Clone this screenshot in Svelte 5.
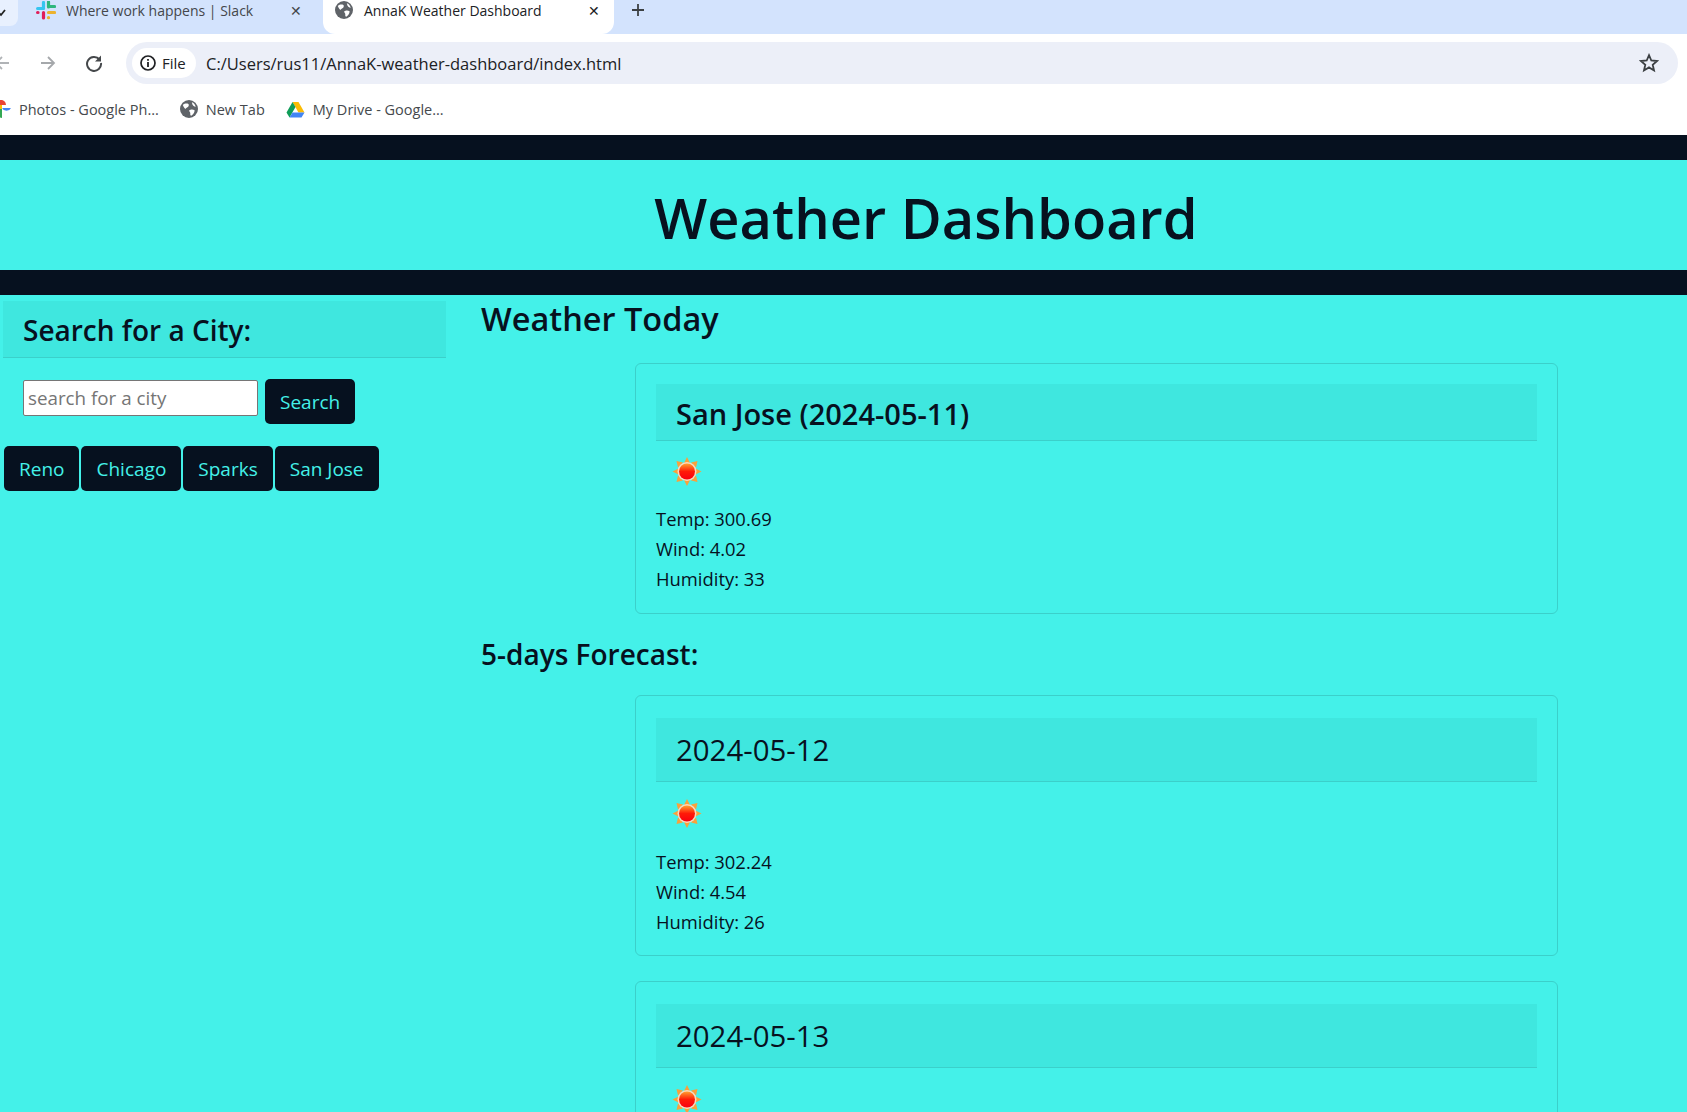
<script lang="ts">
	const history = ['Reno', 'Chicago', 'Sparks', 'San Jose'];
	const today = { temp: '300.69', wind: '4.02', humidity: '33' };
	const forecast = [
		{ date: '2024-05-12', temp: '302.24', wind: '4.54', humidity: '26' },
		{ date: '2024-05-13' }
	];
</script>

{#snippet globe(size)}
	<svg class="globe" width={size} height={size} viewBox="0 0 16 16">
		<circle cx="8" cy="8" r="8" fill="#5f6368" />
		<path d="M2.500 4.500C4 3 6 3 7.500 3.500 8.500 5 7 6.500 5.500 7 5 8.500 4 8 2.500 4.500zM8 9.500c2-1.500 3.500-1 5-.5 0 2-1.500 4-3 5-1.500-.5-.5-2-1-3zM10.500 2c1.500.5 3 2 3.500 4-1.500 0-3-1-3.500-4z" fill="#fff" />
	</svg>
{/snippet}

{#snippet sun()}
	<svg class="sun" viewBox="0 1 62 62" width="62" height="62">
		<defs>
			<linearGradient id="sunfill" x1="0" y1="0" x2="0" y2="1">
				<stop offset="0" stop-color="#ffa030" />
				<stop offset="0.5" stop-color="#ff1a08" />
				<stop offset="1" stop-color="#f80010" />
			</linearGradient>
		</defs>
		<g fill="#f9a13c">
			<path d="M31 16.500l3 6h-6zM31 45.500l3-6h-6zM16.500 31l6-3v6zM45.500 31l-6-3v6z" />
			<path d="M20.500 20.500l6.500 1.500-5 5zM41.500 20.500l-6.500 1.500 5 5zM20.500 41.500l6.500-1.500-5-5zM41.500 41.500l-6.500-1.500 5-5z" />
		</g>
		<circle cx="31" cy="31" r="9.500" fill="#fbd9c0" />
		<circle cx="31" cy="31" r="8" fill="url(#sunfill)" />
	</svg>
{/snippet}

<div class="chrome">
	<div class="tabstrip">
		<div class="stub"><svg width="8" height="8" viewBox="0 0 8 8"><path d="M-2 3l3 3 4-5" fill="none" stroke="#222" stroke-width="1.800" /></svg></div>
		<div class="tab">
			<svg class="slack" width="20" height="19" viewBox="0 0 20 19">
				<g fill="none" stroke-width="3.200" stroke-linecap="round">
					<path d="M7.500 1.500v5M1.600 7.500h6" stroke="#36c5f0" />
					<path d="M12.500 1v5M12.500 5.500h6" stroke="#2eb67d" />
					<path d="M12.500 11.500h6M12.500 16.500v.2" stroke="#ecb22e" />
					<path d="M1.600 11.500h.4M7.500 11.500v5.500" stroke="#e01e5a" />
				</g>
			</svg>
			<span class="tab-title">Where work happens | Slack</span>
			<span class="close">✕</span>
		</div>
		<div class="tab active">
			{@render globe(18)}
			<span class="tab-title">AnnaK Weather Dashboard</span>
			<span class="close">✕</span>
		</div>
		<span class="plus">
			<svg width="14" height="14" viewBox="0 0 14 14"><path d="M7 1v12M1 7h12" stroke="#3c4043" stroke-width="1.800" /></svg>
		</span>
	</div>

	<div class="toolbar">
		<svg class="nav back" width="16" height="16" viewBox="0 0 16 16"><path d="M15 8H2M8 2L2 8l6 6" fill="none" stroke="#b0b3b6" stroke-width="1.800" /></svg>
		<svg class="nav fwd" width="16" height="16" viewBox="0 0 16 16"><path d="M1 8h13M8 2l6 6-6 6" fill="none" stroke="#a5a8ab" stroke-width="1.800" /></svg>
		<svg class="nav reload" width="18" height="18" viewBox="0 0 18 18"><path d="M14.500 5.500A7 7 0 1 0 16 9" fill="none" stroke="#45484b" stroke-width="2" /><path d="M16 1.500v6h-6z" fill="#45484b" /></svg>
		<div class="omnibox">
			<div class="chip">
				<svg width="18" height="18" viewBox="0 0 18 18"><circle cx="9" cy="9" r="7" fill="none" stroke="#202124" stroke-width="1.700" /><path d="M9 8v5M9 5v1.800" stroke="#202124" stroke-width="1.800" /></svg>
				<span>File</span>
			</div>
			<span class="url">C:/Users/rus11/AnnaK-weather-dashboard/index.html</span>
			<svg class="star" width="20" height="20" viewBox="0 0 20 20"><path d="M10 2.200l2.300 5.300 5.700.5-4.300 3.800 1.300 5.600-5-3-5 3 1.300-5.600L2 8l5.700-.5z" fill="none" stroke="#3c4043" stroke-width="1.800" /></svg>
		</div>
	</div>

	<div class="bookmarks">
		<div class="bm photos">
			<svg width="12" height="18" viewBox="0 0 12 18">
				<path d="M0 0a5 5 0 0 1 5 5v4H0z" fill="#fbbc04" transform="translate(-3 0)" />
				<path d="M2 9V4a5 5 0 0 1 0 0h3a5 5 0 0 1 6 5z" fill="#ea4335" transform="translate(-5 -4)" />
				<path d="M2 9h9a5 5 0 0 1-9 0z" fill="#4285f4" transform="translate(0 -1)" />
				<path d="M2 9v9a5 5 0 0 1-5-5V9z" fill="#34a853" />
			</svg>
			<span>Photos - Google Ph...</span>
		</div>
		<div class="bm">
			{@render globe(18)}
			<span>New Tab</span>
		</div>
		<div class="bm">
			<svg width="19" height="17" viewBox="0 0 19 17">
				<path d="M6.500 1h6l6 10.500h-6z" fill="#fbbc04" />
				<path d="M6.500 1L.500 11.500l3 5 6-10.500z" fill="#0f9d58" />
				<path d="M3.500 16.500h12l3-5H6.500z" fill="#4285f4" />
			</svg>
			<span>My Drive - Google...</span>
		</div>
	</div>
</div>

<header class="banner">
	<h1>Weather Dashboard</h1>
</header>

<div class="page">
	<aside class="sidebar">
		<h2 class="side-head">Search for a City:</h2>
		<form class="search" onsubmit={(e) => e.preventDefault()}>
			<input type="text" placeholder="search for a city" />
			<button class="btn" type="submit">Search</button>
		</form>
		<div class="history">
			{#each history as city}
				<button class="btn" type="button">{city}</button>
			{/each}
		</div>
	</aside>

	<main class="main">
		<h2 class="section">Weather Today</h2>
		<section class="card">
			<h3 class="card-head today">San Jose (2024-05-11)</h3>
			{@render sun()}
			<p>Temp: {today.temp}</p>
			<p>Wind: {today.wind}</p>
			<p>Humidity: {today.humidity}</p>
		</section>

		<h3 class="section small">5-days Forecast:</h3>
		{#each forecast as day}
			<section class="card forecast">
				<h3 class="card-head">{day.date}</h3>
				{@render sun()}
				{#if day.temp}
					<p>Temp: {day.temp}</p>
					<p>Wind: {day.wind}</p>
					<p>Humidity: {day.humidity}</p>
				{/if}
			</section>
		{/each}
	</main>
</div>

<style>
	:global(html), :global(body) {
		height: 1112px;
		overflow: hidden;
	}

	:global(body) {
		background: #44f1e9;
		color: #07111f;
		font-family: "Open Sans", "Noto Sans", sans-serif;
	}

	.chrome {
		background: #fff;
		color: #3c4043;
	}

	.tabstrip {
		display: flex;
		height: 34px;
		background: #d3e3fd;
		font-size: 14px;
	}

	.stub {
		width: 18px;
		height: 26px;
		background: #e8f0fe;
		border-radius: 0 0 8px 0;
		display: flex;
		align-items: center;
	}

	.tab {
		width: 305px;
		height: 20px;
		display: flex;
		align-items: center;
		padding: 0 21px 0 18px;
		box-sizing: border-box;
		color: #44474b;
	}

	.tab.active {
		width: 291px;
		height: 34px;
		background: #fff;
		color: #202124;
		padding: 0 14px 14px 12px;
		border-radius: 0 0 12px 12px;
	}

	.tab-title {
		flex: 1;
		margin-left: 10px;
	}

	.tab.active .tab-title {
		margin-left: 11px;
	}

	.close {
		font-size: 14px;
	}

	.plus {
		margin-left: 17px;
		margin-top: 2px;
	}

	.toolbar {
		height: 64px;
		display: flex;
		align-items: flex-start;
		padding: 8px 0 0;
		box-sizing: border-box;
	}

	.nav {
		flex: none;
		margin-top: 13px;
	}

	.back {
		margin-left: -6px;
	}

	.fwd {
		margin-left: 30px;
	}

	.reload {
		margin-left: 29px;
		margin-top: 12px;
	}

	.omnibox {
		width: 1552px;
		height: 42px;
		margin-left: 23px;
		background: #eceff8;
		border-radius: 21px;
		display: flex;
		align-items: center;
		padding: 0 19px 0 6px;
		box-sizing: border-box;
		color: #202124;
		font-size: 16.500px;
	}

	.chip {
		display: flex;
		align-items: center;
		gap: 5px;
		height: 30px;
		width: 64px;
		padding: 0 0 0 7px;
		box-sizing: border-box;
		background: #fff;
		border-radius: 15px;
		font-size: 15px;
		flex: none;
	}

	.url {
		flex: 1;
		margin-left: 10px;
	}

	.bookmarks {
		height: 37px;
		display: flex;
		align-items: flex-start;
		font-size: 14.500px;
		color: #45494d;
		gap: 21px;
	}

	.bm {
		display: flex;
		align-items: center;
		gap: 8px;
		height: 22px;
	}

	.photos {
		gap: 7px;
	}

	.banner {
		background: #44f1e9;
		border-top: 25px solid #06111f;
		border-bottom: 25px solid #06111f;
		height: 110px;
		display: flex;
		align-items: center;
		justify-content: center;
	}

	.banner h1 {
		margin: 6px 0 0 165px;
		font-size: 56px;
		font-weight: 600;
		line-height: 1.2;
	}

	.page {
		display: grid;
		grid-template-columns: 481px 1077px;
		align-items: start;
	}

	.sidebar {
		padding-left: 3px;
	}

	.side-head {
		width: 443px;
		height: 57px;
		margin: 6px 0 0;
		padding: 0 20px;
		box-sizing: border-box;
		background: #3fe7df;
		border-bottom: 1px solid #3bd0ca;
		font-size: 28px;
		font-weight: 600;
		line-height: 58px;
	}

	.search {
		display: flex;
		align-items: flex-start;
		gap: 7px;
		margin: 21px 0 0 20px;
	}

	input {
		width: 235px;
		height: 36px;
		margin-top: 1px;
		padding: 0 4px;
		box-sizing: border-box;
		border: 1px solid #767676;
		border-radius: 2px;
		font: inherit;
		font-size: 18.800px;
		background: #fff;
	}

	input::placeholder {
		color: #757575;
	}

	.btn {
		height: 45px;
		padding: 0 15px;
		background: #06111f;
		color: #44f1e9;
		border: 0;
		border-radius: 5px;
		font: inherit;
		font-size: 19px;
	}

	.history {
		display: flex;
		gap: 2px;
		margin: 22px 0 0 1px;
	}

	.section {
		margin: 0;
		font-size: 32.500px;
		font-weight: 600;
		line-height: 48px;
		padding-bottom: 20px;
	}

	.section.small {
		font-size: 28px;
		line-height: 40px;
		padding-bottom: 21px;
	}

	.card {
		margin: 0 0 20px 154px;
		width: 923px;
		padding: 20px 20px 19px;
		box-sizing: border-box;
		border: 1px solid #3bd0ca;
		border-radius: 6px;
	}

	.card-head {
		margin: 0;
		padding: 0 20px;
		height: 64px;
		box-sizing: border-box;
		background: #3fe7df;
		border-bottom: 1px solid #3bd0ca;
		font-size: 29.400px;
		font-weight: 400;
		line-height: 65px;
	}

	.card-head.today {
		height: 57px;
		line-height: 59px;
		font-size: 29px;
		font-weight: 600;
	}

	.sun {
		display: block;
		height: 63px;
	}

	.forecast {
		margin-bottom: 25px;
		padding-top: 22px;
		padding-bottom: 18px;
	}

	.forecast .sun {
		height: 65px;
	}

	p {
		margin: 0;
		font-size: 18.400px;
		line-height: 30px;
	}
</style>
